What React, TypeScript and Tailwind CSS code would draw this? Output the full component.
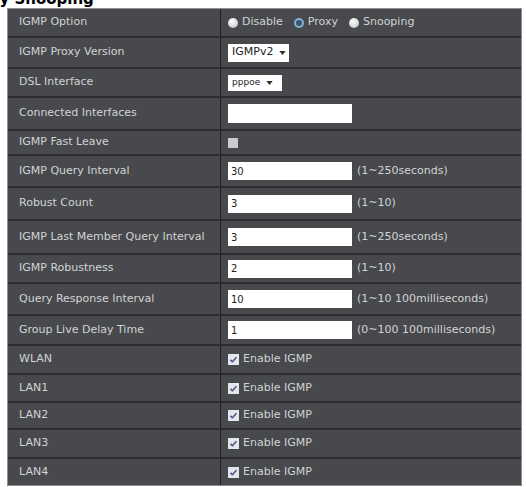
const font = { fontFamily: '"DejaVu Sans", Verdana, sans-serif' };

type Row = { label: string; h: number; kind: string; value?: string; hint?: string };

const rows: Row[] = [
  { label: 'IGMP Option', h: 29, kind: 'radio' },
  { label: 'IGMP Proxy Version', h: 31, kind: 'select-version' },
  { label: 'DSL Interface', h: 29, kind: 'select-dsl' },
  { label: 'Connected Interfaces', h: 33, kind: 'wide-input' },
  { label: 'IGMP Fast Leave', h: 25, kind: 'box' },
  { label: 'IGMP Query Interval', h: 32, kind: 'input', value: '30', hint: '(1~250seconds)' },
  { label: 'Robust Count', h: 33, kind: 'input', value: '3', hint: '(1~10)' },
  { label: 'IGMP Last Member Query Interval', h: 34, kind: 'input', value: '3', hint: '(1~250seconds)' },
  { label: 'IGMP Robustness', h: 29, kind: 'input', value: '2', hint: '(1~10)' },
  { label: 'Query Response Interval', h: 32, kind: 'input', value: '10', hint: '(1~10 100milliseconds)' },
  { label: 'Group Live Delay Time', h: 30, kind: 'input', value: '1', hint: '(0~100 100milliseconds)' },
  { label: 'WLAN', h: 29, kind: 'check' },
  { label: 'LAN1', h: 28, kind: 'check' },
  { label: 'LAN2', h: 27, kind: 'check' },
  { label: 'LAN3', h: 29, kind: 'check' },
  { label: 'LAN4', h: 26, kind: 'check' },
];

const Radio = ({ on }: { on?: boolean }) => (
  <span
    className={
      on
        ? 'inline-block h-[10px] w-[10px] rounded-full border-2 border-[#7fb4dc] bg-[#3d5566]'
        : 'inline-block h-[10px] w-[10px] rounded-full bg-[radial-gradient(circle_at_40%_35%,#ffffff,#b9bbbe)]'
    }
  />
);

const Checked = () => (
  <span className="inline-flex h-[11px] w-[11px] items-center justify-center bg-[#e4e6ee]">
    <svg viewBox="0 0 12 12" className="h-[9px] w-[9px]">
      <path d="M2 6.5l2.5 2.5L10 3" fill="none" stroke="#4a4f78" strokeWidth={2} />
    </svg>
  </span>
);

const Caret = () => (
  <svg viewBox="0 0 8 5" className="ml-[6px] h-[4px] w-[7px]">
    <path d="M0 0h8L4 5z" fill="#333" />
  </svg>
);

const Field = ({ row }: { row: Row }) => {
  switch (row.kind) {
    case 'radio':
      return (
        <div className="flex items-center gap-[4px]">
          <Radio />
          <span>Disable</span>
          <span className="ml-[3px]" />
          <Radio on />
          <span>Proxy</span>
          <span className="ml-[3px]" />
          <Radio />
          <span>Snooping</span>
        </div>
      );
    case 'select-version':
      return (
        <div className="flex h-[18px] w-[61px] items-center bg-white pl-[4px] text-[11px] text-[#222]">
          IGMPv2
          <Caret />
        </div>
      );
    case 'select-dsl':
      return (
        <div className="flex h-[16px] w-[54px] items-center bg-white pl-[4px] text-[9px] text-[#222]">
          pppoe
          <Caret />
        </div>
      );
    case 'wide-input':
      return <div className="h-[19px] w-[124px] bg-white" />;
    case 'box':
      return <span className="inline-block h-[10px] w-[10px] bg-[#c9cbcf]" />;
    case 'input':
      return (
        <div className="flex items-center">
          <div className="flex h-[18px] w-[124px] items-center bg-white pl-[3px] text-[10px] text-[#222]">
            {row.value}
          </div>
          <span className="ml-[5px]">{row.hint}</span>
        </div>
      );
    default:
      return (
        <div className="flex items-center gap-[4px]">
          <Checked />
          <span>Enable IGMP</span>
        </div>
      );
  }
};

export default function App() {
  return (
    <div className="h-[487px] w-[526px] overflow-hidden bg-white" style={font}>
      {/* page heading, mostly scrolled out of view */}
      <div className="-mt-[10px] ml-[-88px] h-[18px] text-[15px] font-bold leading-[18px] text-black whitespace-nowrap">
        IGMP Proxy Snooping
      </div>
      <div className="ml-[7px] w-[515px] border border-[#8d8f92] bg-[#47494c] text-[11px] text-[#d2d3d5]">
        {rows.map((row) => (
          <div
            key={row.label}
            className="flex border-b-2 border-[#2c2d30] last:border-b-0"
            style={{ height: row.h }}
          >
            <div className="flex w-[213px] items-center border-r border-[#1f2022] pl-[11px] whitespace-nowrap">
              {row.label}
            </div>
            <div className="flex flex-1 items-center pl-[7px] whitespace-nowrap">
              <Field row={row} />
            </div>
          </div>
        ))}
      </div>
    </div>
  );
}
